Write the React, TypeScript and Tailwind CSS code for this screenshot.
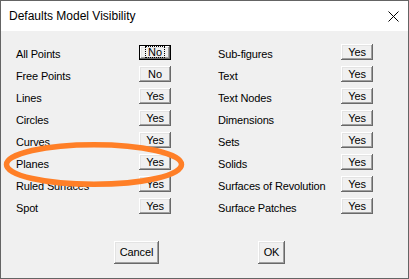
const left = [
  { label: "All Points", value: "No", focus: true },
  { label: "Free Points", value: "No" },
  { label: "Lines", value: "Yes" },
  { label: "Circles", value: "Yes" },
  { label: "Curves", value: "Yes" },
  { label: "Planes", value: "Yes" },
  { label: "Ruled Surfaces", value: "Yes" },
  { label: "Spot", value: "Yes" },
];

const right = [
  { label: "Sub-figures", value: "Yes" },
  { label: "Text", value: "Yes" },
  { label: "Text Nodes", value: "Yes" },
  { label: "Dimensions", value: "Yes" },
  { label: "Sets", value: "Yes" },
  { label: "Solids", value: "Yes" },
  { label: "Surfaces of Revolution", value: "Yes" },
  { label: "Surface Patches", value: "Yes" },
];

const bevel =
  "bg-[#f0f0f0] shadow-[inset_-1px_-1px_#696969,inset_1px_1px_#ffffff,inset_-2px_-2px_#a0a0a0,inset_2px_2px_#e3e3e3]";

function Toggle({ value, focus }: { value: string; focus?: boolean }) {
  if (focus) {
    return (
      <div className="w-[32px] h-[15px] border border-[#000] flex">
        <div className={`flex-1 flex items-center justify-center ${bevel}`}>
          <span className="px-[2px] leading-[10px] outline outline-1 outline-dotted outline-black">
            {value}
          </span>
        </div>
      </div>
    );
  }
  return (
    <div className={`w-[32px] h-[16px] flex items-center justify-center ${bevel}`}>
      {value}
    </div>
  );
}

function Row({ label, value, focus }: { label: string; value: string; focus?: boolean }) {
  return (
    <div className="h-[22px] flex items-center">
      <div className="w-[123px] pt-[4px] whitespace-nowrap">{label}</div>
      <Toggle value={value} focus={focus} />
    </div>
  );
}

export default function App() {
  return (
    <div
      className="relative w-[409px] h-[279px] border border-[#646464] bg-[#f0f0f0] text-[11px] tracking-[-0.15px] text-black overflow-hidden"
      style={{ fontFamily: '"Liberation Sans", Arial, sans-serif' }}
    >
      <div className="h-[30px] bg-white flex items-center justify-between pl-[8px] pr-[9px]">
        <span className="text-[12px] tracking-normal text-[#000]">Defaults Model Visibility</span>
        <svg width="11" height="11" viewBox="0 0 11 11">
          <path d="M0.5 0.5 L10.5 10.5 M10.5 0.5 L0.5 10.5" stroke="#000" strokeWidth="1" />
        </svg>
      </div>

      <div className="pt-[10px] pl-[15px] flex gap-[47px]">
        <div className="flex flex-col">
          {left.map((r) => (
            <Row key={r.label} {...r} />
          ))}
        </div>
        <div className="flex flex-col">
          {right.map((r) => (
            <Row key={r.label} {...r} />
          ))}
        </div>
      </div>

      <div className="mt-[24px] pl-[113px] flex gap-[99px]">
        <div className={`w-[45px] h-[23px] flex items-center justify-center ${bevel}`}>Cancel</div>
        <div className={`w-[27px] h-[23px] flex items-center justify-center ${bevel}`}>OK</div>
      </div>

      <svg className="absolute left-[-1px] top-[-1px] pointer-events-none" width="409" height="279">
        <ellipse cx="94" cy="164.5" rx="87.5" ry="19.8" fill="none" stroke="#ff7f27" strokeWidth="5.5" />
      </svg>
    </div>
  );
}
